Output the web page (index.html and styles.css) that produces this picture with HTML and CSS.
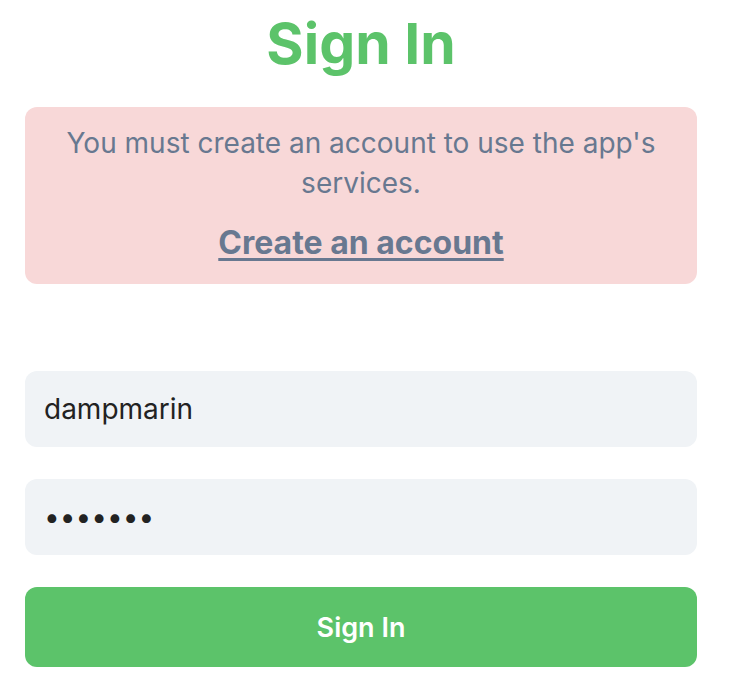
FILE: index.html
```html
<!DOCTYPE html>
<html>
<head>
<meta charset="utf-8">
<link rel="stylesheet" href="styles.css">
</head>
<body>
<main class="page">
  <h1 class="title">Sign In</h1>
  <div class="alert">
    <p class="alert-text">You must create an account to use the app's services.</p>
    <a class="alert-link" href="#">Create an account</a>
  </div>
  <form class="form">
    <input class="field" type="text" value="dampmarin">
    <input class="field" type="password" value="1234567">
    <button class="submit" type="button">Sign In</button>
  </form>
</main>
</body>
</html>
```
FILE: styles.css
```css
* { box-sizing: border-box; }
html, body { margin: 0; padding: 0; background: #fff; }
body { font-family: Inter, "Noto Sans", sans-serif; }
.page {
  width: 672px;
  margin-left: 25px;
  display: flex;
  flex-direction: column;
}
.title {
  margin: 8px 0 0;
  text-align: center;
  color: #5cc36a;
  font-size: 57px;
  font-weight: 700;
  line-height: 72px;
}
.alert {
  margin-top: 27px;
  background: #f8d8d8;
  border-radius: 12px;
  padding: 16px 20px 21px;
  text-align: center;
  color: #687890;
}
.alert-text {
  margin: 0;
  font-size: 28px;
  line-height: 40px;
}
.alert-link {
  display: inline-block;
  margin-top: 20px;
  color: #687890;
  font-size: 32px;
  font-weight: 700;
  line-height: 40px;
  text-decoration: underline;
  text-decoration-thickness: 3px;
  text-underline-offset: 4px;
}
.form {
  margin-top: 87px;
  display: flex;
  flex-direction: column;
  gap: 32px;
}
.field {
  height: 76px;
  border: none;
  border-radius: 12px;
  background: #f0f3f6;
  padding: 0 19px;
  font-family: Inter, "Noto Sans", sans-serif;
  font-size: 28px;
  color: #222;
  outline: none;
}
.submit {
  height: 80px;
  border: none;
  border-radius: 12px;
  background: #5cc36a;
  color: #fff;
  font-family: Inter, "Noto Sans", sans-serif;
  font-size: 27px;
  font-weight: 600;
}
```
